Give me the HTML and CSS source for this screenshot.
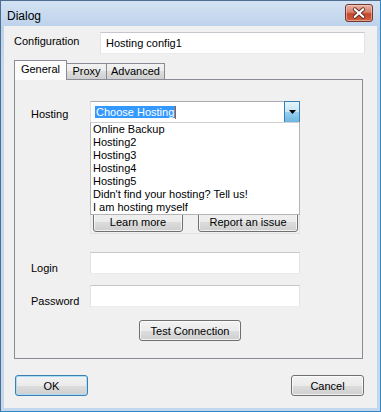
FILE: index.html
```html
<!DOCTYPE html>
<html lang="en">
<head>
<meta charset="UTF-8">
<meta name="viewport" content="width=device-width, initial-scale=1.0">
<title>Dialog</title>
<link rel="stylesheet" href="styles.css">
</head>
<body>
  <div class="window">
    <div class="titlebar">
      <span class="title">Dialog</span>
      <button class="close-btn" aria-label="Close">
        <svg width="28" height="18" viewBox="0 0 28 18">
          <path d="M9.5 5 L18.5 13 M18.5 5 L9.5 13" stroke="#5b2a22" stroke-width="4.2" stroke-linecap="round"/>
          <path d="M9.5 5 L18.5 13 M18.5 5 L9.5 13" stroke="#ffffff" stroke-width="2.4" stroke-linecap="round"/>
        </svg>
      </button>
    </div>

    <div class="client">
      <div class="config-row">
        <label class="config-label" for="config-name">Configuration</label>
        <input type="text" id="config-name" class="field config-field" value="Hosting config1">
      </div>

      <div class="tabs">
        <div class="tab-bar">
          <span class="tab tab-active tab-general">General</span>
          <span class="tab tab-proxy">Proxy</span>
          <span class="tab tab-advanced">Advanced</span>
        </div>
        <div class="tab-pane">
          <div class="form-row hosting-row">
            <label class="form-label">Hosting</label>
            <div class="combo">
              <div class="combo-box">
                <div class="combo-text"><span class="combo-selected">Choose Hosting</span><span class="caret"></span></div>
                <div class="combo-arrow">
                  <svg width="7" height="4" viewBox="0 0 7 4"><path d="M0 0 H7 L3.5 4 Z" fill="#000"/></svg>
                </div>
              </div>
              <ul class="combo-list">
                <li>Online Backup</li>
                <li>Hosting2</li>
                <li>Hosting3</li>
                <li>Hosting4</li>
                <li>Hosting5</li>
                <li>Didn't find your hosting? Tell us!</li>
                <li>I am hosting myself</li>
              </ul>
            </div>
          </div>
          <div class="hosting-box">
            <button class="btn btn-learn">Learn more</button>
            <button class="btn btn-report">Report an issue</button>
          </div>

          <div class="form-row login-row">
            <label class="form-label" for="login">Login</label>
            <input type="text" id="login" class="field form-field">
          </div>
          <div class="form-row password-row">
            <label class="form-label" for="password">Password</label>
            <input type="password" id="password" class="field form-field">
          </div>
          <div class="test-row">
            <button class="btn btn-test">Test Connection</button>
          </div>
        </div>
      </div>

      <div class="dialog-buttons">
        <button class="btn btn-default">OK</button>
        <button class="btn">Cancel</button>
      </div>
    </div>
  </div>
</body>
</html>
```

FILE: styles.css
```css
body {
  margin: 0;
  font-family: "Liberation Sans", Arial, sans-serif;
  font-size: 11px;
  color: #000;
  background-color: #c3d8ee;
}
.window {
  width: 381px;
  height: 412px;
  box-sizing: border-box;
  border: 1px solid #4f6d8f;
  border-right-color: #2f86c9;
  border-bottom-color: #2f86c9;
  padding: 0 3px 3px;
  background: linear-gradient(#d3e2f3, #bcd2eb 26px, #c3d8ee 60px);
  display: flex;
  flex-direction: column;
}
.titlebar {
  height: 25px;
  display: flex;
  align-items: flex-start;
  justify-content: space-between;
  padding: 0 4px 0 3px;
}
.title {
  font-size: 12px;
  line-height: 14px;
  margin-top: 8px;
}
.close-btn {
  width: 28px;
  height: 18px;
  margin-top: 3px;
  padding: 0;
  border: 1px solid #6e3a33;
  border-radius: 3px;
  background: linear-gradient(#eab2a5, #d8806b 45%, #c4472b 55%, #d0613f);
  box-shadow: inset 0 0 0 1px rgba(255, 220, 210, 0.5);
  display: flex;
  align-items: center;
  justify-content: center;
}
.close-btn svg {
  display: block;
}
.client {
  flex: 1;
  background-color: #f0f0f0;
  padding: 6px 10px 0;
}
.config-row {
  display: flex;
  height: 22px;
}
.config-label {
  width: 86px;
  padding-top: 3px;
  line-height: 13px;
}
.field {
  box-sizing: border-box;
  height: 22px;
  margin: 0;
  padding: 0 5px;
  font-family: inherit;
  font-size: 11px;
  color: #000;
  background-color: #fff;
  border: 1px solid #e2e3ea;
  border-top-color: #c5c7cc;
  border-bottom-color: #e9ecef;
  outline: none;
}
.config-field {
  width: 265px;
}
.tabs {
  margin-top: 6px;
}
.tab-bar {
  display: flex;
  align-items: flex-end;
  height: 19px;
}
.tab {
  box-sizing: border-box;
  height: 16px;
  line-height: 15px;
  text-align: center;
  border: 1px solid #898c95;
  border-bottom: none;
  margin-left: -1px;
  background: linear-gradient(#f2f2f2, #ebebeb 50%, #dddddd 50%, #cfcfcf);
}
.tab-active {
  position: relative;
  z-index: 1;
  height: 20px;
  margin-bottom: -1px;
  margin-left: 0;
  padding-top: 1px;
  line-height: 14px;
  background: #fcfcfc;
}
.tab-general {
  width: 53px;
}
.tab-proxy {
  width: 41px;
}
.tab-advanced {
  width: 59px;
}
.tab-pane {
  box-sizing: border-box;
  width: 349px;
  height: 280px;
  border: 1px solid #898c95;
  padding: 21px 0 0 16px;
  background-color: #f0f0f0;
}
.form-row {
  display: flex;
  height: 22px;
}
.form-label {
  width: 59px;
  line-height: 13px;
  padding-top: 10px;
}
.hosting-row .form-label {
  padding-top: 7px;
}
.form-field {
  width: 210px;
}
.combo {
  position: relative;
  width: 210px;
  height: 22px;
}
.combo-box {
  box-sizing: border-box;
  height: 22px;
  display: flex;
  background-color: #fff;
  border: 1px solid #abadb3;
  border-left-color: #dcdde3;
}
.combo-text {
  flex: 1;
  display: flex;
  align-items: center;
  padding-left: 4px;
}
.combo-selected {
  background-color: #3399ff;
  color: #fff;
  line-height: 12px;
  padding: 0 1px;
}
.caret {
  width: 1px;
  height: 13px;
  background-color: #b05a1a;
}
.combo-arrow {
  box-sizing: border-box;
  width: 16px;
  margin: -1px -1px -1px 0;
  border: 1px solid #3c7fb1;
  background: linear-gradient(#e5f4fc, #c4e5f6 50%, #98d1ef 50%, #6cb7e2);
  display: flex;
  align-items: center;
  justify-content: center;
}
.combo-arrow svg {
  display: block;
}
.combo-list {
  position: absolute;
  z-index: 2;
  top: 21px;
  left: 0;
  box-sizing: border-box;
  width: 210px;
  margin: 0;
  padding: 0;
  list-style: none;
  background-color: #fff;
  border: 1px solid #b4b4b4;
  border-top-color: #d0d0d0;
}
.combo-list li {
  line-height: 13px;
  padding-left: 2px;
  white-space: nowrap;
}
.hosting-box {
  box-sizing: border-box;
  width: 210px;
  height: 111px;
  margin-left: 59px;
  border: 1px solid #e2e2e2;
  border-top: none;
  padding: 0 1px 1px 2px;
  display: flex;
  align-items: flex-end;
  justify-content: space-between;
}
.btn {
  box-sizing: border-box;
  height: 21px;
  margin: 0;
  padding: 0;
  font-family: inherit;
  font-size: 11px;
  color: #000;
  border: 1px solid #707070;
  border-radius: 3px;
  background: linear-gradient(#f2f2f2, #ebebeb 50%, #dddddd 50%, #cfcfcf);
  box-shadow: inset 0 0 0 1px rgba(255, 255, 255, 0.7);
  width: 73px;
}
.btn-learn {
  width: 90px;
}
.btn-report {
  width: 100px;
}
.login-row {
  margin-top: 18px;
}
.password-row {
  margin-top: 11px;
}
.test-row {
  margin-top: 13px;
  display: flex;
}
.btn-test {
  width: 102px;
  margin-left: 108px;
}
.dialog-buttons {
  width: 349px;
  margin-top: 16px;
  padding-left: 1px;
  display: flex;
  justify-content: space-between;
}
.btn-default {
  border-color: #3c7fb1;
  box-shadow: inset 0 0 0 1px #a9dcf6;
}
```
